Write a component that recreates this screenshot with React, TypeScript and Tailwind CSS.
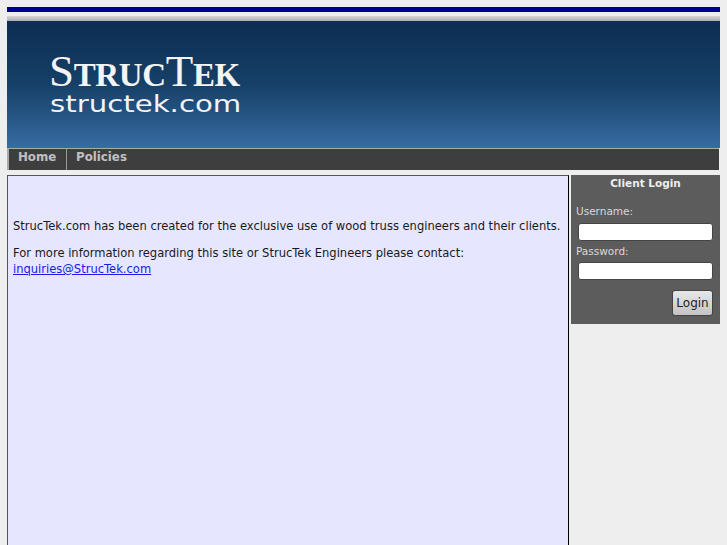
export default function App() {
  return (
    <div className="h-[545px] w-[727px] overflow-hidden bg-[#eeeeee] pt-[7px] px-[7px] font-['DejaVu_Sans',sans-serif] text-[12px]">
      {/* Top rule */}
      <div className="h-[5px] w-[713px] bg-[#000090]" />
      <div className="mt-[4px] h-[5px] w-[713px] bg-gradient-to-b from-[#d4d4dc] to-[#aeaeae]" />

      {/* Banner */}
      <div className="h-[127px] w-[713px] bg-gradient-to-b from-[#0d2d52] via-[#164068] to-[#376ca3] pl-[43px] pt-[31px] text-[#f4f4f4]">
        <div className="-ml-[1px] h-[38px] whitespace-nowrap font-['Liberation_Serif',serif] text-[33px] leading-[38px] font-bold tracking-[-0.35px]">
          <span className="text-[45px] leading-[38px] font-normal">S</span>TRUC<span className="text-[45px] leading-[38px] font-normal">T</span>EK
        </div>
        <div className="origin-left scale-x-[1.27] whitespace-nowrap text-[23px] leading-[28px]">structek.com</div>
      </div>

      {/* Nav */}
      <div className="flex h-[22px] w-[712px] border-t border-l-[2px] border-[#aaaaaa] bg-[#3e3e3e] text-[11.8px] font-bold text-[#c0c0c0]">
        <div className="h-full w-[58px] border-r border-[#9a9a9a] pl-[9px] pt-[1px] leading-[15px]">Home</div>
        <div className="pl-[9px] pt-[1px] leading-[15px]">Policies</div>
      </div>

      <div className="mt-[5px] flex items-start gap-[2px]">
        {/* Main content */}
        <div className="h-[400px] w-[562px] border border-[#000000] border-t-[#555555] border-l-[#555555] bg-[#e6e6ff] px-[5px] pt-[43px] text-[11.53px] leading-[15px] text-[#1a1a1a]">
          <p className="whitespace-nowrap">StrucTek.com has been created for the exclusive use of wood truss engineers and their clients.</p>
          <p className="mt-[12px] whitespace-nowrap">For more information regarding this site or StrucTek Engineers please contact:</p>
          <a href="#" className="mt-[1px] inline-block text-[#1a1aee] underline">inquiries@StrucTek.com</a>
        </div>

        {/* Login */}
        <div className="h-[149px] w-[149px] bg-[#5c5c5c] px-[5px] pt-[2px] text-[10.5px] text-[#d8d8d8]">
          <div className="text-center font-bold leading-[13px] text-[#eeeeee]">Client Login</div>
          <div className="mt-[15px] leading-[13px]">Username:</div>
          <input className="mt-[5px] ml-[2px] block h-[18px] w-[135px] rounded-[3px] border border-[#444444] bg-white" />
          <div className="mt-[4px] leading-[13px]">Password:</div>
          <input className="mt-[4px] ml-[2px] block h-[18px] w-[135px] rounded-[3px] border border-[#444444] bg-white" />
          <div className="mt-[10px] flex justify-end pr-[2px]">
            <button className="h-[26px] w-[41px] rounded-[3px] border border-[#444444] bg-gradient-to-b from-[#e8e8e8] to-[#c4c4c4] text-[12px] text-[#222222]">Login</button>
          </div>
        </div>
      </div>
    </div>
  );
}
